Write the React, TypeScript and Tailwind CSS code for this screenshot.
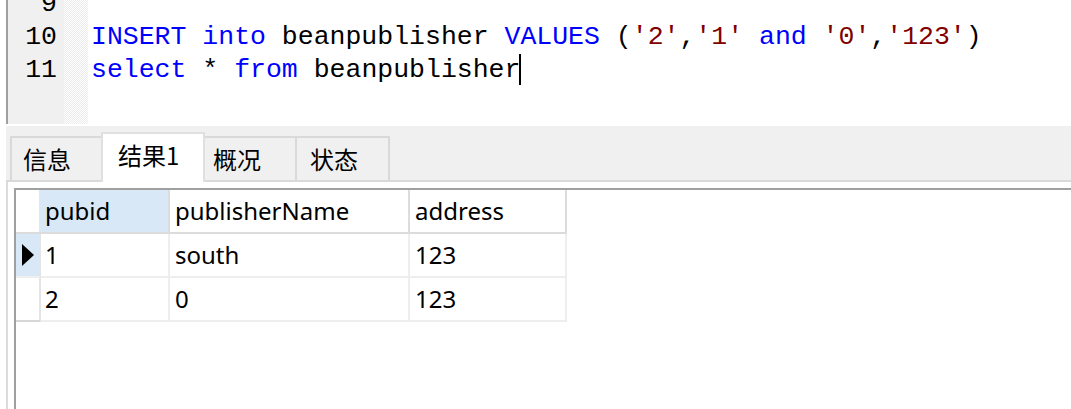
const MONO = "font-['Liberation_Mono','Courier_New',monospace]";

type Tok = { t: string; c?: 'kw' | 'str' };

const KW = 'text-[#0000ff]';
const STR = 'text-[#800000]';

const line10: Tok[] = [
  { t: 'INSERT', c: 'kw' },
  { t: ' ' },
  { t: 'into', c: 'kw' },
  { t: ' beanpublisher ' },
  { t: 'VALUES', c: 'kw' },
  { t: ' (' },
  { t: "'2'", c: 'str' },
  { t: ',' },
  { t: "'1'", c: 'str' },
  { t: ' ' },
  { t: 'and', c: 'kw' },
  { t: ' ' },
  { t: "'0'", c: 'str' },
  { t: ',' },
  { t: "'123'", c: 'str' },
  { t: ')' },
];

const line11: Tok[] = [
  { t: 'select', c: 'kw' },
  { t: ' * ' },
  { t: 'from', c: 'kw' },
  { t: ' beanpublisher' },
];

function Tokens({ toks }: { toks: Tok[] }) {
  return (
    <>
      {toks.map((k, i) => (
        <span key={i} className={k.c === 'kw' ? KW : k.c === 'str' ? STR : 'text-black'}>
          {k.t}
        </span>
      ))}
    </>
  );
}

function Editor() {
  return (
    <div className={`flex h-[124px] overflow-hidden border-l-2 border-[#a0a0a0] ${MONO} text-[26.5px] leading-[33px]`}>
      <div className="w-[56px] shrink-0 bg-[#f0f0f0] pr-[7px] text-right text-black">
        <div className="-mt-[12px]">
          <div>9</div>
          <div>10</div>
          <div>11</div>
        </div>
      </div>
      <div className="w-[24px] shrink-0 bg-[image:repeating-conic-gradient(#ebebeb_0%_25%,#ffffff_0%_50%)] bg-size-[2px_2px]" />
      <div className="flex-1 whitespace-pre bg-white pl-[3px]">
        <div className="-mt-[12px]">
          <div>&nbsp;</div>
          <div>
            <Tokens toks={line10} />
          </div>
          <div>
            <Tokens toks={line11} />
            <span className="-ml-[1px] inline-block h-[31px] w-[2px] bg-black align-top" />
          </div>
        </div>
      </div>
    </div>
  );
}

function Tabs() {
  return (
    <div className="flex h-[56px] shrink-0 items-end border-b-2 border-[#d9d9d9] bg-[#f0f0f0] pl-[4px] font-['Noto_Sans_CJK_SC',sans-serif] text-[24px] text-black">
      <div className="flex h-[44px] w-[93px] items-center border-2 border-b-0 border-[#d9d9d9] pl-[11px]">信息</div>
      <div className="relative z-10 -mb-[2px] -ml-[2px] flex h-[50px] w-[104px] items-center border-2 border-b-0 border-[#e0e0e0] bg-white pb-[6px] pl-[15px]">
        结果1
      </div>
      <div className="-ml-[2px] flex h-[44px] w-[94px] items-center border-2 border-b-0 border-[#d9d9d9] pl-[8px]">概况</div>
      <div className="-ml-[2px] flex h-[44px] w-[95px] items-center border-2 border-b-0 border-[#d9d9d9] pl-[13px]">状态</div>
    </div>
  );
}

const rows = [
  { id: '1', name: 'south', addr: '123', selected: true },
  { id: '2', name: '0', addr: '123', selected: false },
];

function Grid() {
  return (
    <div className="flex h-full flex-col border-l-2 border-t-2 border-[#a0a0a0] font-['Noto_Sans',sans-serif] text-[24px] text-black">
      <div className="flex h-[44px] w-fit border-b-2 border-[#dcdcdc]">
        <div className="w-[23px]" />
        <div className="flex w-[131px] items-center border-r-2 border-[#dcdcdc] bg-[#d8e8f6] pl-[6px]">pubid</div>
        <div className="flex w-[240px] items-center border-r-2 border-[#dcdcdc] pl-[5px]">publisherName</div>
        <div className="flex w-[157px] items-center border-r-2 border-[#dcdcdc] pl-[5px]">address</div>
      </div>
      {rows.map((r, i) => (
        <div key={r.id} className="flex h-[44px] w-fit">
          <div
            className={`flex w-[25px] items-center border-b-2 border-r-2 border-r-[#e4e4e4] pl-[6px] ${
              i === rows.length - 1 ? 'border-b-[#d6d6d6]' : 'border-b-[#eeeeee]'
            } ${r.selected ? 'bg-[#d8e8f6]' : 'bg-white'}`}
          >
            {r.selected && (
              <svg width="12" height="22" viewBox="0 0 12 22">
                <polygon points="0,0 12,11 0,22" fill="#000" />
              </svg>
            )}
          </div>
          <div className="flex w-[129px] items-center border-b-2 border-r-2 border-[#eeeeee] pl-[4px]">{r.id}</div>
          <div className="flex w-[240px] items-center border-b-2 border-r-2 border-[#eeeeee] pl-[5px]">{r.name}</div>
          <div className="flex w-[157px] items-center border-b-2 border-r-2 border-[#eeeeee] pl-[5px]">{r.addr}</div>
        </div>
      ))}
    </div>
  );
}

export default function App() {
  return (
    <div className="flex h-[409px] w-[1071px] flex-col overflow-hidden bg-white pl-[6px]">
      <Editor />
      <div className="mt-[2px] flex min-h-0 flex-1 flex-col">
        <Tabs />
        <div className="min-h-0 flex-1 border-l-2 border-[#dcdcdc] bg-white pl-[6px] pt-[6px]">
          <Grid />
        </div>
      </div>
    </div>
  );
}
